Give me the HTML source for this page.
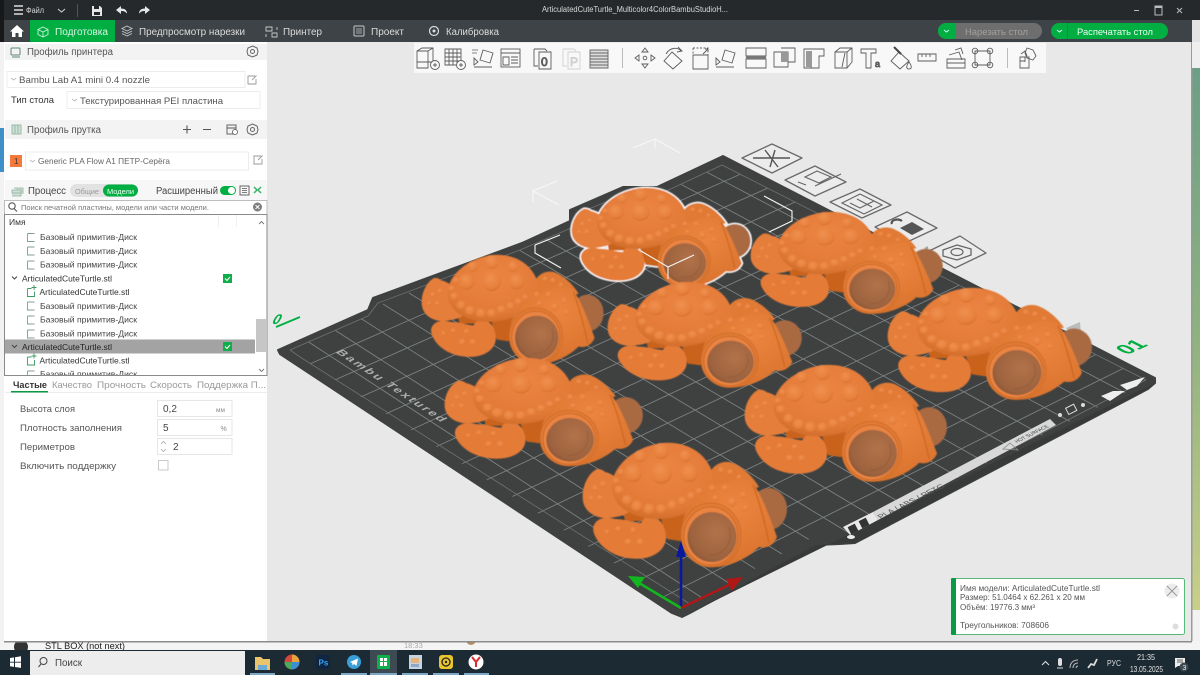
<!DOCTYPE html>
<html lang="ru"><head><meta charset="utf-8"><title>Bambu Studio</title>
<style>
html,body{margin:0;padding:0;background:#fff;width:1200px;height:675px;overflow:hidden}
svg{display:block;filter:blur(.3px)}
text{font-family:"Liberation Sans","DejaVu Sans",sans-serif;font-size:9.5px;fill:#444}
.ic{fill:none;stroke:#666;stroke-width:1}
.tb{fill:none;stroke:#5c5c5c;stroke-width:.9}
</style></head><body>
<svg width="1200" height="675" viewBox="0 0 1200 675" xmlns="http://www.w3.org/2000/svg">
<defs>
<linearGradient id="wall" x1="0" y1="0" x2="0" y2="1"><stop offset="0" stop-color="#6c9f86"/><stop offset=".5" stop-color="#8fb27f"/><stop offset="1" stop-color="#c9cf88"/></linearGradient>
<radialGradient id="shellG" cx=".5" cy=".35" r=".7"><stop offset="0" stop-color="#ec8444"/><stop offset=".75" stop-color="#e27a37"/><stop offset="1" stop-color="#cd6a28"/></radialGradient>
<radialGradient id="headG" cx=".55" cy=".3" r=".8"><stop offset="0" stop-color="#ec8540"/><stop offset="1" stop-color="#d67029"/></radialGradient>
<radialGradient id="eyeG" cx=".6" cy=".4" r=".72"><stop offset="0" stop-color="#b27249"/><stop offset=".75" stop-color="#9d633f"/><stop offset="1" stop-color="#7f4f30"/></radialGradient>
<radialGradient id="bump" cx=".45" cy=".35" r=".65"><stop offset="0" stop-color="#f09050"/><stop offset=".8" stop-color="#e67f3b"/><stop offset="1" stop-color="#d6702c"/></radialGradient>
<filter id="sb" x="-5%" y="-5%" width="110%" height="110%"><feGaussianBlur stdDeviation=".5"/></filter>
<clipPath id="plateClip"><polygon points="290,350 368,316 378,303 520,250 576,226 576,214 626,194 660,194 722,165 1146,380 1120,396 854,530 840,536 815,536 690,604 682,608 300,357"/></clipPath>
<clipPath id="treeClip"><rect x="5" y="228" width="252" height="147"/></clipPath>

<path id="pShell" d="M29 47C26 26 50 3 80 0C106-2 126 12 131 35C135 55 112 71 86 75C60 79 33 70 29 47Z"/>
<path id="pF1" d="M14 26C5 30-2 45 0 58C2 70 15 76 25 75C35 74 50 72 50 60C50 45 30 30 22 29C20 27 17 26 14 26Z"/>
<path id="pF2" d="M11 82C15 74 24 74 32 76C42 76 52 80 58 80C60 76 62 74 66 74C74 74 80 78 82 88C86 100 78 112 62 115C45 118 25 112 15 98C11 92 9 87 11 82Z"/>
<path id="pBody" d="M40 66L100 58L112 90L97 98L84 96L78 76L60 78L42 78Z"/>
<path id="pF3" d="M126 32C130 20 142 17 150 20C160 24 170 34 176 44L130 56Z"/>
<path id="pHead" d="M99 90C98 70 110 52 130 45C145 38 158 34 167 38C176 44 186 72 194 94C191 102 184 106 176 104C165 115 150 122 135 124C115 124 100 110 99 90Z"/>
<ellipse id="pRear" cx="186" cy="66" rx="18" ry="21"/>

<g id="turtle">
<use href="#pF3" fill="#e07a36"/>
<g fill="url(#bump)"><circle cx="138" cy="27" r="3"/><circle cx="147" cy="29" r="3"/><circle cx="156" cy="34" r="2.600"/></g>
<use href="#pBody" fill="#c9641f"/>
<use href="#pRear" fill="#a96a43"/>
<use href="#pF1" fill="#e57e3b"/>
<use href="#pF2" fill="#e47c38"/>
<use href="#pShell" fill="url(#shellG)"/>
<g fill="url(#bump)">
<circle cx="78" cy="30" r="11"/><circle cx="50" cy="30" r="9"/><circle cx="106" cy="30" r="9"/><circle cx="78" cy="8" r="8"/><circle cx="57" cy="13" r="6"/><circle cx="102" cy="13" r="6"/>
<circle cx="36" cy="47" r="4.500"/><circle cx="44" cy="57" r="5"/><circle cx="54" cy="63" r="5.500"/><circle cx="66" cy="66" r="5.500"/><circle cx="78" cy="66" r="5"/><circle cx="89" cy="62" r="5"/><circle cx="99" cy="58" r="4.500"/><circle cx="108" cy="53" r="4"/><circle cx="116" cy="48" r="3.500"/>
<circle cx="33" cy="38" r="3.500"/><circle cx="38" cy="29" r="3.500"/>
<circle cx="12" cy="45" r="3"/><circle cx="20" cy="41" r="3"/><circle cx="8" cy="55" r="2.500"/><circle cx="17" cy="55" r="3"/>
<circle cx="35" cy="86" r="3"/><circle cx="45" cy="99" r="3.600"/><circle cx="57" cy="99" r="3.600"/><circle cx="24" cy="89" r="2.600"/><circle cx="50" cy="87" r="3"/>
</g>
<use href="#pHead" fill="url(#headG)"/>
<g fill="url(#bump)"><circle cx="129" cy="45" r="3.400"/><circle cx="142" cy="45" r="3.400"/><circle cx="132" cy="55" r="3"/><circle cx="149" cy="59" r="4.600"/><circle cx="160" cy="52" r="3.400"/><circle cx="162" cy="65" r="3"/></g>
<path d="M170 42C176 58 182 80 186 100" fill="none" stroke="#c9661f" stroke-width="1.200"/>
<ellipse cx="128" cy="92" rx="30" ry="32" fill="#e07a35" stroke="#c86a28" stroke-width=".8"/>
<ellipse cx="128" cy="93" rx="27" ry="29" fill="#ea8442" stroke="#c4631f" stroke-width=".8"/>
<ellipse cx="129" cy="94" rx="24.500" ry="25" fill="url(#eyeG)"/>
<path d="M146 84C151 100 140 113 126 112" fill="none" stroke="#7e4c2e" stroke-width="1" opacity=".4"/>
</g>
</defs>

<!-- desktop behind -->
<rect width="1200" height="675" fill="#f2f2f2"/>
<rect x="1192" y="68" width="8" height="542" fill="url(#wall)"/>
<rect x="0" y="128" width="4" height="44" fill="#3f8fc8"/>
<rect x="0" y="641" width="1200" height="9" fill="#f4f4f4"/>
<text x="45" y="649" style="font-size:9px;fill:#222" textLength="80" lengthAdjust="spacingAndGlyphs">STL BOX (not next)</text>
<circle cx="21" cy="647" r="7" fill="#333"/>
<text x="404" y="648" style="font-size:7.500px;fill:#aaa">18:33</text>
<circle cx="471" cy="640" r="5" fill="#b98a5a"/>

<!-- window -->
<rect x="4" y="2" width="1188" height="639" fill="#e8e8e8"/>
<rect x="1191" y="40" width="1.500" height="601" fill="#9a9a9a"/>
<rect x="4" y="641" width="1188" height="1.500" fill="#8c8c8c"/>
<rect x="0" y="0" width="1200" height="20" fill="#26292b"/>
<rect x="0" y="0" width="4" height="42" fill="#16181a"/>
<rect x="4" y="20" width="1188" height="22" fill="#3d4346"/>
<rect x="1192" y="0" width="8" height="68" fill="#efefef"/>
<rect x="1192" y="0" width="8" height="20" fill="#26292b"/>
<rect x="1192" y="20" width="8" height="22" fill="#e3e3e3"/>

<!-- title bar -->
<path d="M14 6h9M14 10h9M14 14h9" stroke="#ddd" stroke-width="1.400"/>
<text x="26" y="13" style="font-size:8px;fill:#d6d6d6" textLength="18" lengthAdjust="spacingAndGlyphs">Файл</text>
<path d="M58 9l3.500 3l3.500-3" fill="none" stroke="#ccc" stroke-width="1.100"/>
<rect x="77" y="4" width="1" height="13" fill="#555"/>
<path d="M92 6h8l2 2v8h-10z" fill="#e6e6e6"/><rect x="94" y="6" width="5" height="3" fill="#26292b"/><rect x="94" y="12" width="6" height="3" fill="#26292b"/>
<path d="M116 10l5-4v2.500c4 0 6 2 6 5c-2-2-3-2.500-6-2.500v3z" fill="#e6e6e6"/>
<path d="M150 10l-5-4v2.500c-4 0-6 2-6 5c2-2 3-2.500 6-2.500v3z" fill="#e6e6e6"/>
<text x="542" y="12" style="font-size:8px;fill:#d8d8d8" textLength="186" lengthAdjust="spacingAndGlyphs">ArticulatedCuteTurtle_Multicolor4ColorBambuStudioH...</text>
<path d="M1134 10.500h5" stroke="#bbb" stroke-width="1"/>
<rect x="1155" y="6" width="7" height="9" fill="none" stroke="#bbb"/><rect x="1155" y="6" width="7" height="2" fill="#bbb"/>
<path d="M1177 8l5 5M1182 8l-5 5" stroke="#bbb" stroke-width="1"/>

<!-- tabs -->
<path d="M17 25l7 6.500h-2v5.500h-3.500v-4h-3v4h-3.500v-5.500h-2z" fill="#fff"/>
<rect x="30" y="20" width="85" height="22" fill="#00ae42"/>
<path d="M43 27l5 2.500v5l-5 2.500l-5-2.500v-5zM38 29.500l5 2.500l5-2.500M43 32v5" fill="none" stroke="#cdf2da" stroke-width=".9"/>
<text x="55" y="35" style="font-size:10px;fill:#d9f6e3" textLength="53" lengthAdjust="spacingAndGlyphs">Подготовка</text>
<path d="M127 26l5 2.500l-5 2.500l-5-2.500zM122 31l5 2.500l5-2.500M122 33.500l5 2.500l5-2.500" fill="none" stroke="#c8c8c8" stroke-width=".9"/>
<text x="139" y="35" style="font-size:10px;fill:#dcdcdc" textLength="106" lengthAdjust="spacingAndGlyphs">Предпросмотр нарезки</text>
<path d="M266 27h6v4h-6zM272 33h5v4h-5zM277 27v3M266 34v3" fill="none" stroke="#c8c8c8" stroke-width=".9"/>
<text x="283" y="35" style="font-size:10px;fill:#dcdcdc" textLength="39" lengthAdjust="spacingAndGlyphs">Принтер</text>
<rect x="354" y="26" width="10" height="10" rx="1" fill="none" stroke="#c8c8c8"/><path d="M356 29h6M356 31h6M356 33h6" stroke="#c8c8c8" stroke-width=".8"/>
<text x="371" y="35" style="font-size:10px;fill:#dcdcdc" textLength="33" lengthAdjust="spacingAndGlyphs">Проект</text>
<circle cx="434" cy="31" r="4.500" fill="none" stroke="#ddd" stroke-width="1.200"/><circle cx="434" cy="31" r="1.500" fill="#ddd"/>
<text x="446" y="35" style="font-size:10px;fill:#dcdcdc" textLength="53" lengthAdjust="spacingAndGlyphs">Калибровка</text>

<rect x="938" y="23" width="104" height="16" rx="8" fill="#6e6e6e"/>
<path d="M946 23h9v16h-9a8 8 0 0 1 0-16z" fill="#00ae42"/><path d="M944 30l2.500 2l2.500-2" fill="none" stroke="#cff" stroke-width=".9"/>
<text x="965" y="35" style="font-size:9.500px;fill:#a0a0a0" textLength="63" lengthAdjust="spacingAndGlyphs">Нарезать стол</text>
<rect x="1051" y="23" width="117" height="16" rx="8" fill="#00ae42"/><rect x="1067" y="23" width="1" height="16" fill="#0a8e3a"/>
<path d="M1057 30l2.500 2l2.500-2" fill="none" stroke="#dff" stroke-width=".9"/>
<text x="1077" y="35" style="font-size:9.500px;fill:#eafff1" textLength="76" lengthAdjust="spacingAndGlyphs">Распечатать стол</text>

<!-- plate -->
<polygon points="278,350 368,310 373,298 522,243 570,221 570,210 623,187 657,187 723,156 1155,378 1155,383 1148,389 855,543 840,544 816,545 690,613 682,617 672,613 280,354" fill="#3f4141" stroke="#3f4141" stroke-width="2" stroke-linejoin="round"/>
<polygon points="682,617 1155,383 1148,389 855,543 816,545 690,613" fill="#383a3a"/>
<g clip-path="url(#plateClip)" stroke="#7c8080" stroke-width=".9" fill="none">
<path d="M657 600L1128 366M631 584L1101 352M606 567L1074 338M581 550L1047 324M556 534L1020 310M530 517L993 296M505 500L966 282M480 483L939 268M455 467L912 254M429 450L885 240M404 433L858 226M379 417L831 212M354 400L804 198M328 383L777 184M303 367L750 170"/>
<path d="M710 603L304 339M738 589L330 327M765 575L357 316M793 561L383 304M821 547L409 293M849 533L435 282M877 519L461 270M904 505L488 259M932 491L514 247M960 478L540 236M988 464L566 224M1016 450L592 213M1044 436L619 202M1071 422L645 190M1099 408L671 179M1127 394L697 167"/>
</g>
<polyline points="290,350 368,316 378,303 520,250 576,226 576,214 626,194 660,194 722,165 1146,380" fill="none" stroke="#6e7272" stroke-width=".8"/>
<polyline points="290,350 300,357 690,604" fill="none" stroke="#6e7272" stroke-width=".8"/>
<polyline points="1146,380 860,526" fill="none" stroke="#6e7272" stroke-width=".8"/>

<!-- plate labels -->
<text transform="matrix(.83,.55,-.8,.36,335,352)" style="font-size:13px;fill:#acaeae;letter-spacing:2px;font-weight:bold">Bambu Textured</text>
<polygon points="873,512 1050,419 1056,425 878,520" fill="#d8d8d8"/>
<polygon points="843,527 873,512 878,520 850,535" fill="#e8e8e8"/>
<text transform="matrix(.9,-.45,.6,.42,881,519)" style="font-size:11px;fill:#555" textLength="72" lengthAdjust="spacingAndGlyphs">PLA / ABS / PETG</text>
<text transform="matrix(.9,-.45,.6,.42,1017,443)" style="font-size:7.500px;fill:#444" textLength="36" lengthAdjust="spacingAndGlyphs">HOT SURFACE</text>
<path d="M1003 449l7-6l8 7z" fill="none" stroke="#888" stroke-width=".8"/>
<rect x="849" y="525" width="8" height="8" fill="#333" transform="rotate(-27 853 529)"/><rect x="860" y="519" width="8" height="8" fill="#333" transform="rotate(-27 864 523)"/>
<ellipse cx="851" cy="537" rx="4" ry="2" fill="#ececec"/>
<polygon points="1101,396 1113,391 1125,391 1110,401" fill="#eee"/>
<polygon points="1120,385 1145,377 1137,386 1127,390" fill="#eee"/>
<rect x="1067" y="406" width="9" height="7" fill="none" stroke="#ddd" transform="rotate(-27 1071 410)"/>
<circle cx="1060" cy="415" r="2" fill="#ddd"/><circle cx="1083" cy="405" r="2" fill="#ddd"/>
<text transform="translate(271,324) skewX(-28)" style="font-size:14px;font-weight:bold;fill:#00ae42">0</text>
<path d="M276 327L300 317" stroke="#00ae42" stroke-width="1.800"/>

<!-- plate side buttons -->
<g fill="#ececec" stroke="#6a6a6a" stroke-width="1.300" stroke-linejoin="round">
<polygon points="742,158 772,144 802,158 772,173"/>
<polygon points="785,180 815,166 846,182 815,196"/>
<polygon points="830,202 860,189 891,205 862,218"/>
<polygon points="875,227 907,212 937,228 905,243"/>
<polygon points="927,252 960,236 986,253 955,268"/>
</g>
<path d="M765 150L778 167M775 150L770 167M753 158L790 158" stroke="#555" stroke-width="1.400" fill="none"/>
<path d="M805 177l12-6l14 6l-12 6zM815 186l26-12M798 182l8 3" fill="none" stroke="#666" stroke-width="1.200"/>
<path d="M842 203l18-9l22 11l-18 9zM850 203l10 5l14-7M857 199l15 8" fill="none" stroke="#666" stroke-width="1.200"/>
<path d="M900 228l12-6l12 7l-12 6z" fill="#555"/><path d="M892 224c-2-4 6-6 10-3" fill="none" stroke="#555" stroke-width="2.200"/>
<polygon points="957,245 971,249 971,255 957,260 943,256 943,250" fill="none" stroke="#666" stroke-width="1.300"/><ellipse cx="957" cy="252" rx="6" ry="3.500" fill="none" stroke="#666" stroke-width="1.200"/>
<polygon points="924,248 928,246 928,252" fill="#aaa"/>
<polygon points="1066,328 1080,322 1082,345" fill="#b8bcbc"/>

<!-- selection gizmos -->
<g fill="none" stroke="#f7f7f7" stroke-width="1.100">
<path d="M633 148L655 139L680 153M655 139V148"/>
<path d="M557 181L533 191L559 205M533 191V202"/>
<path d="M535 245L560 235M535 245V253L561 268"/>
<path d="M764 196L792 211V221L769 232"/>
</g>

<!-- turtles -->
<g filter="url(#sb)">
<g fill="#fff" stroke="#fff" stroke-width="3.500" transform="translate(572,188) scale(.875,.8)">
<use href="#pF1"/><use href="#pF2"/><use href="#pShell"/><use href="#pHead"/><use href="#pRear"/><use href="#pF3"/><use href="#pBody"/>
</g>
<use href="#turtle" transform="translate(572,188) scale(.875,.8)"/>
<use href="#turtle" transform="translate(751,212) scale(.94,.82)"/>
<use href="#turtle" transform="translate(422,255) scale(.89,.88)"/>
<use href="#turtle" transform="translate(608,282) scale(.95,.85)"/>
<use href="#turtle" transform="translate(888,288) scale(1,.9)"/>
<use href="#turtle" transform="translate(445,358) scale(.97,.87)"/>
<use href="#turtle" transform="translate(745,365) scale(.99,.94)"/>
<use href="#turtle" transform="translate(583,443) scale(1,1)"/>
</g>
<g fill="none" stroke="#f5f5f5" stroke-width="1.100"><path d="M641 251L668 267L694 255M668 267V279"/></g>
<text transform="matrix(1.400,-.63,1.400,.7,1127,355)" style="font-size:14px;font-weight:bold;fill:#00ae42">01</text>

<!-- axes -->
<path d="M681 608V545" stroke="#0a18a0" stroke-width="2.600"/><polygon points="681,541 676,557 686,557" fill="#0a18a0"/>
<path d="M681 608L634 580" stroke="#12b61e" stroke-width="2.600"/><polygon points="628,576 645,577 638,588" fill="#12b61e"/>
<path d="M681 608L735 582" stroke="#b01818" stroke-width="2.600"/><polygon points="743,577 726,579 732,591" fill="#b01818"/>

<!-- gizmo toolbar -->
<rect x="414" y="43" width="632" height="30" fill="#f8f8f8"/>
<g class="tb">
<path d="M417 51l5-3h11v14h-16zM417 51h11v17h-11zM428 51l5-3"/><circle cx="435" cy="65" r="4.500" fill="#f8f8f8"/><path d="M433 65h4M435 63v4"/>
<path d="M445 49h16v16h-16zM449 49v16M453 49v16M457 49v16M445 53h16M445 57h16M445 61h16"/><circle cx="461" cy="65" r="4.500" fill="#f8f8f8"/><path d="M459 65h4M461 63v4"/>
<path d="M483 50l10 3l-3 10l-10-3zM474 67h18M474 58l4 4l-4 3z"/><path d="M472 50h6M472 53h5" stroke-width=".7"/>
<rect x="501" y="49" width="19" height="18"/><path d="M501 53h19M503 57h6v8h-6zM511 57h7M511 60h7M511 63h7"/>
<path d="M534 49h11l2 2M534 49v17h4M539 52h12v17h-12z"/><text x="541" y="66" style="font-size:12px;fill:#555">0</text>
<g opacity=".25"><path d="M563 49h11l2 2M563 49v17h4M568 52h12v17h-12z"/><text x="570" y="66" style="font-size:12px;fill:#555">P</text></g>
<path d="M590 50h18v18h-18zM590 53h18M590 56h18M590 59h18M590 62h18M590 65h18" stroke="#666" fill="#ddd"/>
<rect x="622" y="48" width="1" height="20" fill="#bbb" stroke="none"/>
<path d="M645 48l3 4h-6zM645 68l3-4h-6zM635 58l4-3v6zM655 58l-4-3v6z"/><circle cx="645" cy="58" r="1.800"/>
<path d="M672 52l10 9l-9 8l-9-8zM666 54c4-7 12-7 15-3M678 47l4 4l-5 1"/>
<path d="M693 55h15v14h-15z"/><path d="M693 48h15v7M693 48v7" stroke-dasharray="2 1.500"/><path d="M703 54l5-5M705 49h3v3"/>
<path d="M725 50l10 3l-3 10l-10-3zM716 67h18M716 58l4 4l-4 3z"/>
<path d="M746 48h20v8h-20zM746 59h20v9h-20z"/><rect x="746" y="56" width="20" height="3" fill="#777" stroke="none"/>
<path d="M774 52h14v15h-14zM781 48h14v14h-7"/><rect x="781" y="52" width="7" height="10" fill="#999" stroke="none"/>
<path d="M804 49h20v7h-5v12h-15zM811 56v12"/><rect x="806" y="51" width="6" height="16" fill="#999" stroke="none"/>
<path d="M835 52l5-4h12v14l-5 6h-12zM835 52h12v16M847 52l5-4M842 67l3-14"/>
<path d="M861 49h15v4h-5v15h-5v-15h-5z"/><text x="875" y="67" style="font-size:9px;fill:#555">a</text>
<path d="M899 52l10 9l-9 8l-9-8zM909 62c-3 4-3 7 0 7s3-3 0-7z"/><path d="M894 47l7 7" stroke-width="2" stroke="#444"/>
<path d="M918 54h18v7h-18zM922 54v3M926 54v3M930 54v3"/>
<path d="M947 59h18v9h-18zM947 63h18M949 55l10-3l3 8M955 50l6-2l2 6"/>
<path d="M975 51h15v14h-15z"/><circle cx="975" cy="51" r="2.800"/><circle cx="990" cy="51" r="2.800"/><circle cx="975" cy="65" r="2.800"/><circle cx="990" cy="65" r="2.800"/>
<rect x="1007" y="48" width="1" height="20" fill="#bbb" stroke="none"/>
<path d="M1020 57h9v11h-9zM1020 61h5M1025 57v5M1027 48l6 2l3 6l-3 4l-6-2l-2-5zM1021 54l4-3l2 5"/>
</g>

<!-- left panel -->
<rect x="4" y="42" width="263" height="599" fill="#fff"/>
<rect x="5" y="44" width="262" height="16" fill="#f3f3f3"/>
<rect x="5" y="120" width="262" height="19" fill="#f3f3f3"/>
<rect x="5" y="180" width="262" height="20" fill="#f7f7f7"/>
<rect x="11" y="48" width="9" height="7" rx="1" fill="none" stroke="#5c8a75"/><path d="M12 57h8" stroke="#5c8a75"/>
<text x="27" y="55" style="font-size:10px;fill:#555" textLength="86" lengthAdjust="spacingAndGlyphs">Профиль принтера</text>
<g class="ic"><polygon points="252.500,46 257,48 258,51.500 257,55 252.500,57 248,55 247,51.500 248,48"/><circle cx="252.500" cy="51.500" r="2"/></g>

<rect x="7" y="71.500" width="238" height="16" fill="#fff" stroke="#ececec"/>
<path d="M11 78l2.500 2l2.500-2" fill="none" stroke="#aaa" stroke-width=".8"/>
<text x="19" y="83" style="font-size:9.500px;fill:#555" textLength="131" lengthAdjust="spacingAndGlyphs">Bambu Lab A1 mini 0.4 nozzle</text>
<path d="M255 76h-7v8h8v-5M252 80l4.500-4.500" fill="none" stroke="#999" stroke-width=".9"/>
<text x="11" y="103" style="font-size:9.500px;fill:#333" textLength="43" lengthAdjust="spacingAndGlyphs">Тип стола</text>
<rect x="67" y="91.500" width="193" height="17" fill="#fff" stroke="#ececec"/>
<path d="M72 99l2.500 2l2.500-2" fill="none" stroke="#aaa" stroke-width=".8"/>
<text x="80" y="104" style="font-size:9.500px;fill:#555" textLength="143" lengthAdjust="spacingAndGlyphs">Текстурированная PEI пластина</text>

<rect x="12" y="125" width="9" height="9" fill="#cfe0d6" stroke="#9bbaa8"/><path d="M15 125v9M18 125v9" stroke="#9bbaa8"/>
<text x="27" y="133" style="font-size:10px;fill:#555" textLength="74" lengthAdjust="spacingAndGlyphs">Профиль прутка</text>
<path d="M183 129.500h8M187 125.500v8M203 129.500h8" stroke="#555" stroke-width="1.100"/>
<rect x="227" y="125" width="9" height="9" class="ic"/><path d="M227 128h9" stroke="#555"/><circle cx="235" cy="132" r="2.500" fill="#fff" stroke="#555" stroke-width=".8"/>
<g class="ic"><polygon points="252.500,124 257,126 258,129.500 257,133 252.500,135 248,133 247,129.500 248,126"/><circle cx="252.500" cy="129.500" r="2"/></g>

<rect x="10" y="155" width="12" height="12" fill="#f5793a"/>
<text x="14" y="164" style="font-size:8px;fill:#333">1</text>
<rect x="25.500" y="152" width="223" height="18" fill="#fff" stroke="#ececec"/>
<path d="M30 160l2.500 2l2.500-2" fill="none" stroke="#aaa" stroke-width=".8"/>
<text x="38" y="164" style="font-size:8.500px;fill:#666" textLength="132" lengthAdjust="spacingAndGlyphs">Generic PLA Flow A1 ПЕТР-Серёга</text>
<path d="M261 156h-7v8h8v-5M258 160l4.500-4.500" fill="none" stroke="#999" stroke-width=".9"/>

<path d="M12 190h9v3h-9zM12 193h9v3h-9M14 188h9v6" fill="#cfe0d6" stroke="#8fb09e" stroke-width=".8"/>
<text x="28" y="194" style="font-size:10px;fill:#444" textLength="38" lengthAdjust="spacingAndGlyphs">Процесс</text>
<rect x="70" y="184" width="68" height="13" rx="6.500" fill="#e2e2e2"/>
<rect x="103" y="184.500" width="35" height="12" rx="6" fill="#00ae42"/>
<text x="75" y="194" style="font-size:7.500px;fill:#9a9a9a" textLength="24" lengthAdjust="spacingAndGlyphs">Общие</text>
<text x="107" y="194" style="font-size:7.500px;fill:#e9fff1" textLength="27" lengthAdjust="spacingAndGlyphs">Модели</text>
<text x="156" y="194" style="font-size:10px;fill:#444" textLength="62" lengthAdjust="spacingAndGlyphs">Расширенный</text>
<rect x="220" y="186" width="16" height="9" rx="4.500" fill="#00ae42"/><circle cx="231.500" cy="190.500" r="3.500" fill="#fff"/>
<rect x="240" y="186" width="9" height="9" class="ic"/><path d="M242 188.500h5M242 190.500h5M242 192.500h5" stroke="#555" stroke-width=".7"/>
<path d="M254 187l3 3l-3 3M261 187l-3 3l3 3" fill="none" stroke="#39b56a" stroke-width="1.500"/>

<rect x="4.500" y="200.500" width="262.500" height="14" fill="#fff" stroke="#bdbdbd"/>
<circle cx="12" cy="206" r="3.200" fill="none" stroke="#555" stroke-width="1.100"/><path d="M14 208.500l3 3" stroke="#555" stroke-width="1.100"/>
<text x="21" y="210" style="font-size:7.500px;fill:#777" textLength="188" lengthAdjust="spacingAndGlyphs">Поиск печатной пластины, модели или части модели.</text>
<circle cx="257.500" cy="207" r="4.500" fill="#7d7d7d"/><path d="M255.500 205l4 4M259.500 205l-4 4" stroke="#fff" stroke-width=".9"/>

<!-- tree -->
<rect x="4.500" y="214.500" width="262.500" height="161" fill="#fff" stroke="#8a8a8a"/>
<text x="9" y="225" style="font-size:8.500px;fill:#333">Имя</text>
<path d="M218.500 215v12M236.500 215v12" stroke="#efefef"/>
<path d="M259 224l2.500-2.500l2.500 2.500" fill="none" stroke="#777" stroke-width=".9"/>
<path d="M259 369l2.500 2.500l2.500-2.500" fill="none" stroke="#777" stroke-width=".9"/>
<rect x="256" y="319" width="10" height="33" fill="#c6c6c6"/>
<rect x="5" y="339.500" width="250" height="14" fill="#a3a3a3"/>
<g clip-path="url(#treeClip)">
<text x="40" y="240" style="font-size:8.500px;fill:#444" textLength="97" lengthAdjust="spacingAndGlyphs">Базовый примитив-Диск</text>
<text x="40" y="254" style="font-size:8.500px;fill:#444" textLength="97" lengthAdjust="spacingAndGlyphs">Базовый примитив-Диск</text>
<text x="40" y="267.500" style="font-size:8.500px;fill:#444" textLength="97" lengthAdjust="spacingAndGlyphs">Базовый примитив-Диск</text>
<text x="22" y="281.500" style="font-size:8.500px;fill:#333" textLength="90" lengthAdjust="spacingAndGlyphs">ArticulatedCuteTurtle.stl</text>
<text x="39.500" y="295" style="font-size:8.500px;fill:#333" textLength="90" lengthAdjust="spacingAndGlyphs">ArticulatedCuteTurtle.stl</text>
<text x="40" y="309" style="font-size:8.500px;fill:#444" textLength="97" lengthAdjust="spacingAndGlyphs">Базовый примитив-Диск</text>
<text x="40" y="322.500" style="font-size:8.500px;fill:#444" textLength="97" lengthAdjust="spacingAndGlyphs">Базовый примитив-Диск</text>
<text x="40" y="336.500" style="font-size:8.500px;fill:#444" textLength="97" lengthAdjust="spacingAndGlyphs">Базовый примитив-Диск</text>
<text x="22" y="350" style="font-size:8.500px;fill:#222" textLength="90" lengthAdjust="spacingAndGlyphs">ArticulatedCuteTurtle.stl</text>
<text x="39.500" y="363.500" style="font-size:8.500px;fill:#333" textLength="90" lengthAdjust="spacingAndGlyphs">ArticulatedCuteTurtle.stl</text>
<text x="40" y="377" style="font-size:8.500px;fill:#444" textLength="97" lengthAdjust="spacingAndGlyphs">Базовый примитив-Диск</text>
<g fill="none" stroke="#7f9c8c" stroke-width=".9">
<path d="M27.500 233.500h7M27.500 233.500v8h7"/>
<path d="M27.500 247h7M27.500 247v8h7"/>
<path d="M27.500 261h7M27.500 261v8h7"/>
<path d="M27.500 288.500h4M27.500 288.500v8h7v-5M34 285v5M31.500 287.500h5" stroke="#3d9a63"/>
<path d="M27.500 302h7M27.500 302v8h7"/>
<path d="M27.500 316h7M27.500 316v8h7"/>
<path d="M27.500 330h7M27.500 330v8h7"/>
<path d="M27.500 357h4M27.500 357v8h7v-5M34 353.500v5M31.500 356h5" stroke="#3d9a63"/>
<path d="M27.500 371h7M27.500 371v8h7"/>
</g>
<path d="M12 276.500l2.500 2.500l2.500-2.500M12 345l2.500 2.500l2.500-2.500" fill="none" stroke="#444" stroke-width="1"/>
</g>
<rect x="223" y="274" width="9" height="9" fill="#0fae4a"/><path d="M225 278.500l2 2l3-3.500" fill="none" stroke="#fff" stroke-width="1"/>
<rect x="223" y="342" width="9" height="9" fill="#0fae4a"/><path d="M225 346.500l2 2l3-3.500" fill="none" stroke="#fff" stroke-width="1"/>

<!-- params -->
<text x="13" y="388" style="font-size:9.500px;font-weight:bold;fill:#333" textLength="34" lengthAdjust="spacingAndGlyphs">Частые</text>
<text x="52" y="388" style="font-size:9.500px;fill:#9a9a9a" textLength="40" lengthAdjust="spacingAndGlyphs">Качество</text>
<text x="97" y="388" style="font-size:9.500px;fill:#9a9a9a" textLength="49" lengthAdjust="spacingAndGlyphs">Прочность</text>
<text x="150" y="388" style="font-size:9.500px;fill:#9a9a9a" textLength="42" lengthAdjust="spacingAndGlyphs">Скорость</text>
<text x="197" y="388" style="font-size:9.500px;fill:#9a9a9a" textLength="69" lengthAdjust="spacingAndGlyphs">Поддержка П...</text>
<rect x="5" y="392" width="262" height="1" fill="#ececec"/>
<rect x="11" y="391" width="37" height="1.500" fill="#0a9a45"/>
<text x="20" y="412" style="font-size:9.500px;fill:#555" textLength="55" lengthAdjust="spacingAndGlyphs">Высота слоя</text>
<rect x="157.500" y="400.500" width="74.500" height="16" fill="#fff" stroke="#e6e6e6"/>
<text x="163" y="412" style="font-size:10px;fill:#444">0,2</text>
<text x="216" y="412" style="font-size:6.500px;fill:#888">мм</text>
<text x="20" y="431" style="font-size:9.500px;fill:#555" textLength="102" lengthAdjust="spacingAndGlyphs">Плотность заполнения</text>
<rect x="157.500" y="419.500" width="74.500" height="16" fill="#fff" stroke="#e6e6e6"/>
<text x="163" y="431" style="font-size:10px;fill:#444">5</text>
<text x="220.500" y="431" style="font-size:7px;fill:#888">%</text>
<text x="20" y="450" style="font-size:9.500px;fill:#555" textLength="55" lengthAdjust="spacingAndGlyphs">Периметров</text>
<rect x="157.500" y="438.500" width="74.500" height="16" fill="#fff" stroke="#e6e6e6"/>
<path d="M161 444l2.500-2.500l2.500 2.500M161 449l2.500 2.500l2.500-2.500" fill="none" stroke="#aaa" stroke-width=".8"/>
<text x="173" y="450" style="font-size:10px;fill:#444">2</text>
<text x="20" y="469" style="font-size:9.500px;fill:#555" textLength="96" lengthAdjust="spacingAndGlyphs">Включить поддержку</text>
<rect x="158.500" y="460.500" width="9.500" height="9.500" fill="#fff" stroke="#c9c9c9"/>

<!-- info box -->
<rect x="951.500" y="578.500" width="233" height="56" rx="2" fill="#fff" stroke="#58b878"/>
<rect x="951" y="578" width="5" height="57" rx="1" fill="#0a9a45"/>
<text x="960" y="591" style="font-size:8px;fill:#555" textLength="140" lengthAdjust="spacingAndGlyphs">Имя модели: ArticulatedCuteTurtle.stl</text>
<text x="960" y="600" style="font-size:8px;fill:#555" textLength="125" lengthAdjust="spacingAndGlyphs">Размер: 51.0464 x 62.261 x 20 мм</text>
<text x="960" y="610" style="font-size:8px;fill:#555" textLength="75" lengthAdjust="spacingAndGlyphs">Объём: 19776.3 мм³</text>
<text x="960" y="628" style="font-size:8px;fill:#555" textLength="89" lengthAdjust="spacingAndGlyphs">Треугольников: 708606</text>
<circle cx="1172" cy="591" r="7.500" fill="#ececec"/><path d="M1167 586l10 10M1177 586l-10 10" stroke="#999" stroke-width="1"/>
<circle cx="1175.500" cy="626.500" r="3" fill="#ddd"/>

<!-- taskbar -->
<rect x="0" y="650" width="1200" height="25" fill="#1c2a33"/>
<rect x="30" y="651" width="215" height="24" fill="#ededed"/>
<path d="M10 658l4-.6v4.300h-4zM15 657.200l6-.9v5.400h-6zM10 662.600h4v4.300l-4-.6zM15 662.600h6v5.300l-6-.9z" fill="#fff"/>
<circle cx="43.500" cy="661" r="3.500" fill="none" stroke="#444" stroke-width="1"/><path d="M41 664l-2.500 3" stroke="#444" stroke-width="1"/>
<text x="55" y="666" style="font-size:10px;fill:#444" textLength="27" lengthAdjust="spacingAndGlyphs">Поиск</text>
<rect x="370" y="650" width="27" height="25" fill="#3e4a52"/>
<rect x="250" y="673" width="25" height="2" fill="#7ea9c6"/><rect x="341" y="673" width="26" height="2" fill="#7ea9c6"/><rect x="370" y="673" width="27" height="2" fill="#7ea9c6"/><rect x="402" y="673" width="26" height="2" fill="#7ea9c6"/><rect x="433" y="673" width="26" height="2" fill="#7ea9c6"/><rect x="464" y="673" width="25" height="2" fill="#7ea9c6"/>
<path d="M255 657h6l2 2h7v11h-15z" fill="#e9c46a"/><rect x="258" y="665" width="9" height="5" fill="#6aa9d8"/>
<circle cx="292" cy="662" r="7.500" fill="#d3473d"/><path d="M292 654.500a7.500 7.500 0 0 1 7.500 7.500h-7.500z" fill="#e8a33d"/><path d="M299.500 662a7.500 7.500 0 0 1-7.500 7.500v-7.500z" fill="#3d8fd3"/><path d="M292 669.500a7.500 7.500 0 0 1-7.500-7.500h7.500z" fill="#48a95a"/>
<rect x="316" y="655" width="14" height="14" rx="2" fill="#0f2540"/><text x="318.500" y="665.500" style="font-size:8px;font-weight:bold;fill:#31a8ff">Ps</text>
<circle cx="354" cy="662" r="7" fill="#3a9fd8"/><path d="M350 662l8-3.500l-1.500 7.500l-2.500-2l-1.500 1.500l-.3-2.500z" fill="#fff"/>
<rect x="377" y="655" width="13" height="14" rx="1" fill="#0fb04c"/><path d="M380 658h3v3h-3zM384 658h3v3h-3zM380 662h3v4h-3zM384 662h3v4h-3z" fill="#fff"/>
<rect x="409" y="655" width="13" height="14" fill="#c8d3e0"/><rect x="411" y="658" width="8" height="5" fill="#e8b27a"/><rect x="411" y="664" width="8" height="3" fill="#8fa8c7"/>
<rect x="439" y="655" width="14" height="14" rx="3" fill="#e9c62e"/><circle cx="446" cy="662" r="4" fill="none" stroke="#222" stroke-width="1.300"/><circle cx="446" cy="662" r="1.200" fill="#222"/>
<circle cx="476" cy="662" r="7.500" fill="#fff"/><path d="M472 657l4 5l4-5M476 662v5" fill="none" stroke="#e02b2b" stroke-width="2"/>

<path d="M1042 665l3.500-3.500l3.500 3.500" fill="none" stroke="#ddd" stroke-width="1.100"/>
<rect x="1058" y="658" width="4" height="8" rx="2" fill="#ddd"/><path d="M1057 668h6" stroke="#ddd"/>
<path d="M1070 668c0-5 3-8 8-8M1073 668c0-3 2-5 5-5M1076 668c0-1 1-2 2-2" fill="none" stroke="#bbb" stroke-width="1"/>
<path d="M1088 668l3-4l3 1l3-6" fill="none" stroke="#ddd" stroke-width="1.800"/>
<text x="1107" y="666" style="font-size:8px;fill:#ddd" textLength="14" lengthAdjust="spacingAndGlyphs">РУС</text>
<text x="1137" y="660" style="font-size:8px;fill:#e4e4e4" textLength="18" lengthAdjust="spacingAndGlyphs">21:35</text>
<text x="1130" y="672" style="font-size:8px;fill:#e4e4e4" textLength="33" lengthAdjust="spacingAndGlyphs">13.05.2025</text>
<path d="M1175 658h10v8h-7l-3 2z" fill="#eee"/><path d="M1177 660h6M1177 662h6" stroke="#333" stroke-width=".7"/>
<circle cx="1184" cy="667" r="4.500" fill="#3e4a52"/><text x="1182.500" y="670" style="font-size:7px;fill:#eee">3</text>
</svg>
</body></html>
